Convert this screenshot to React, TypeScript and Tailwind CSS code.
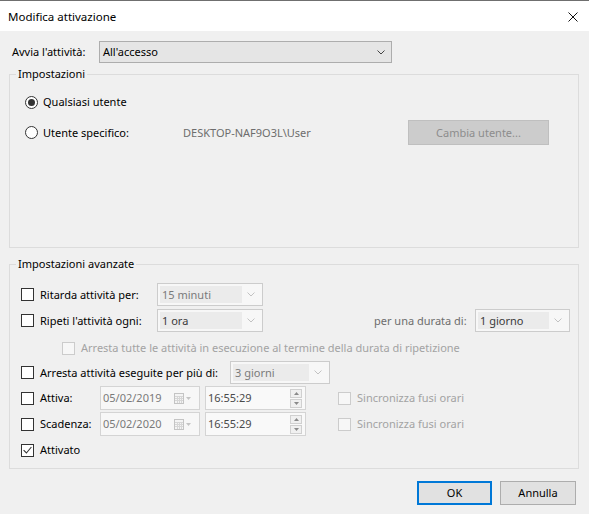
import React from 'react'

function Check({ checked = false, disabled = false }: { checked?: boolean; disabled?: boolean }) {
  return (
    <span
      className={`w-[13px] h-[13px] shrink-0 border flex items-center justify-center ${
        disabled ? 'border-[#cccccc] bg-[#f7f7f7]' : 'border-[#333333] bg-white'
      }`}
    >
      {checked && (
        <svg width="9" height="8" viewBox="0 0 9 8">
          <path d="M0.6 4.2 L3.4 7 L8.4 1" fill="none" stroke="#333333" strokeWidth="1.1" />
        </svg>
      )}
    </span>
  )
}

function Radio({ checked = false }: { checked?: boolean }) {
  return (
    <span className="w-[13px] h-[13px] shrink-0 rounded-full border border-[#333333] bg-white flex items-center justify-center">
      {checked && <span className="w-[7px] h-[7px] rounded-full bg-[#333333]" />}
    </span>
  )
}

function Chevron({ color }: { color: string }) {
  return (
    <svg width="8" height="5" viewBox="0 0 8 5">
      <path d="M0.5 0.5 L4 4 L7.5 0.5" fill="none" stroke={color} strokeWidth="1" />
    </svg>
  )
}

function Combo({ value, width, dark = false }: { value: string; width: string; dark?: boolean }) {
  return (
    <div className={`${width} h-[23px] border border-[#cccccc] bg-[#f7f7f7] flex items-center p-[2px]`}>
      <span
        className={`h-full flex-1 bg-[#ebebeb] flex items-center pl-[2px] ${
          dark ? 'text-[#3a3a3a]' : 'text-[#7a7a7a]'
        }`}
      >
        {value}
      </span>
      <span className="w-[18px] flex justify-center">
        <Chevron color="#c2c2c2" />
      </span>
    </div>
  )
}

function DateBox({ value }: { value: string }) {
  return (
    <div className="w-[100px] h-[24px] border border-[#d4d4d4] bg-[#f7f7f7] flex items-center pl-[2px] pr-[7px] text-[#7a7a7a]">
      <span className="flex-1">{value}</span>
      <svg width="18" height="11" viewBox="0 0 18 11">
        <rect x="0.5" y="0.5" width="9" height="10" fill="#f4f4f4" stroke="#c4c4c4" />
        <path d="M1 3.5 H9 M1 5.5 H9 M1 7.5 H9 M3.5 3 V10 M5.5 3 V10 M7.5 3 V10" stroke="#d6d6d6" strokeWidth="1" />
        <path d="M12 4 L17 4 L14.5 7 Z" fill="#c4c4c4" />
      </svg>
    </div>
  )
}

function TimeBox({ value }: { value: string }) {
  return (
    <div className="w-[101px] h-[24px] border border-[#d4d4d4] bg-[#f9f9f9] flex items-center pl-[2px] pr-[3px] text-[#4a4a4a]">
      <span className="flex-1">{value}</span>
      <div className="flex flex-col gap-[1px]">
        <span className="w-[12px] h-[9px] border border-[#d0d0d0] bg-[#f0f0f0] flex items-center justify-center">
          <svg width="5" height="3" viewBox="0 0 5 3">
            <path d="M0 3 L2.5 0 L5 3 Z" fill="#8a8a8a" />
          </svg>
        </span>
        <span className="w-[12px] h-[9px] border border-[#d0d0d0] bg-[#f0f0f0] flex items-center justify-center">
          <svg width="5" height="3" viewBox="0 0 5 3">
            <path d="M0 0 L5 0 L2.5 3 Z" fill="#8a8a8a" />
          </svg>
        </span>
      </div>
    </div>
  )
}

export default function App() {
  return (
    <div className="w-[589px] h-[514px] bg-[#f0f0f0] font-['Segoe_UI','Noto_Sans',sans-serif] text-[11px] leading-[16px] text-black whitespace-nowrap overflow-hidden flex flex-col">
      {/* title bar */}
      <div className="h-[31px] shrink-0 bg-white border-t border-[#6f6f6f] flex items-center pl-[8px] pr-[11px] pt-[1px] text-[12px]">
        <span className="flex-1 text-[11.5px]">Modifica attivazione</span>
        <svg width="10" height="10" viewBox="0 0 10 10">
          <path d="M0.5 0.5 L9.5 9.5 M9.5 0.5 L0.5 9.5" stroke="#111" strokeWidth="1" />
        </svg>
      </div>

      <div className="pl-[9px] pr-[10px] flex flex-col">
        <div className="mt-[10px] flex items-center pl-[3px]">
          <span className="w-[87px]">Avvia l'attività:</span>
          <div className="w-[293px] h-[22px] bg-[#e5e5e5] border border-[#adadad] flex items-center pl-[3px] pr-[6px]">
            <span className="flex-1">All'accesso</span>
            <Chevron color="#444444" />
          </div>
        </div>

        <fieldset className="mt-[3px] h-[182px] border border-[#dcdcdc] px-0">
          <legend className="ml-[6px] px-[2px] leading-[16px]">Impostazioni</legend>
          <div className="pl-[15px] mt-[12px] h-[16px] flex items-center gap-[5px]">
            <Radio checked />
            <span>Qualsiasi utente</span>
          </div>
          <div className="pl-[15px] mt-[10px] h-[25px] flex items-center">
            <div className="w-[158px] flex items-center gap-[5px]">
              <Radio />
              <span>Utente specifico:</span>
            </div>
            <span className="w-[225px] text-[#6d6d6d]">DESKTOP-NAF9O3L\User</span>
            <button className="w-[141px] h-[25px] bg-[#cccccc] border border-[#bfbfbf] text-[#8d8d8d]">
              Cambia utente...
            </button>
          </div>
        </fieldset>

        <fieldset className="mt-[8px] h-[213px] border border-[#dcdcdc] px-0">
          <legend className="ml-[6px] px-[2px] leading-[16px]">Impostazioni avanzate</legend>
          <div className="pl-[11px] flex flex-col">
            <div className="mt-[11px] h-[23px] flex items-center">
              <div className="w-[136px] flex items-center gap-[6px]">
                <Check />
                <span>Ritarda attività per:</span>
              </div>
              <Combo value="15 minuti" width="w-[106px]" />
            </div>
            <div className="mt-[3px] h-[23px] flex items-center">
              <div className="w-[136px] flex items-center gap-[6px]">
                <Check />
                <span>Ripeti l'attività ogni:</span>
              </div>
              <Combo value="1 ora" width="w-[106px]" dark />
              <span className="ml-[111px] w-[101px] text-[#6d6d6d]">per una durata di:</span>
              <Combo value="1 giorno" width="w-[95px]" dark />
            </div>
            <div className="mt-[8px] h-[16px] flex items-center gap-[6px] pl-[41px]">
              <Check disabled />
              <span className="text-[#a3a3a3]">
                Arresta tutte le attività in esecuzione al termine della durata di ripetizione
              </span>
            </div>
            <div className="mt-[5px] h-[23px] flex items-center">
              <div className="w-[209px] flex items-center gap-[6px]">
                <Check />
                <span>Arresta attività eseguite per più di:</span>
              </div>
              <Combo value="3 giorni" width="w-[100px]" />
            </div>
            <div className="mt-[2px] h-[24px] flex items-center">
              <div className="w-[79px] flex items-center gap-[6px]">
                <Check />
                <span>Attiva:</span>
              </div>
              <DateBox value="05/02/2019" />
              <div className="ml-[5px]">
                <TimeBox value="16:55:29" />
              </div>
              <div className="ml-[32px] flex items-center gap-[6px]">
                <Check disabled />
                <span className="text-[#a3a3a3]">Sincronizza fusi orari</span>
              </div>
            </div>
            <div className="mt-[2px] h-[24px] flex items-center">
              <div className="w-[79px] flex items-center gap-[6px]">
                <Check />
                <span>Scadenza:</span>
              </div>
              <DateBox value="05/02/2020" />
              <div className="ml-[5px]">
                <TimeBox value="16:55:29" />
              </div>
              <div className="ml-[32px] flex items-center gap-[6px]">
                <Check disabled />
                <span className="text-[#a3a3a3]">Sincronizza fusi orari</span>
              </div>
            </div>
            <div className="mt-[6px] h-[16px] flex items-center gap-[6px]">
              <Check checked />
              <span>Attivato</span>
            </div>
          </div>
        </fieldset>

        <div className="mt-[12px] flex justify-end gap-[8px] pr-[3px]">
          <button className="w-[75px] h-[24px] bg-[#e1e1e1] border-2 border-[#0078d7]">OK</button>
          <button className="w-[76px] h-[24px] bg-[#e1e1e1] border border-[#adadad]">Annulla</button>
        </div>
      </div>
    </div>
  )
}
